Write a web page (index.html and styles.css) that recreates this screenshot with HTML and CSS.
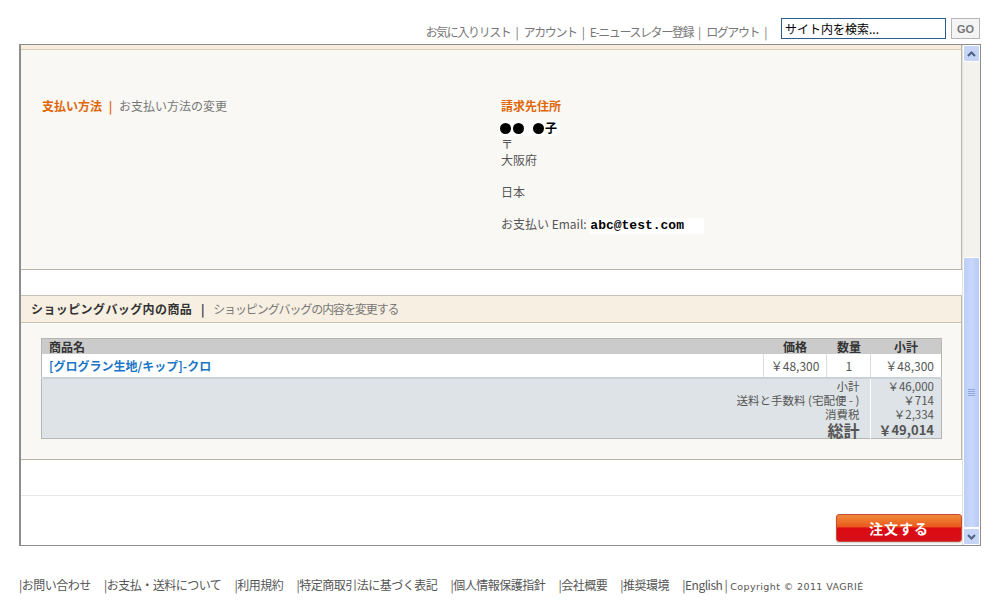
FILE: index.html
```html
<!DOCTYPE html>
<html lang="ja">
<head>
    <meta charset="UTF-8">
    <title>ご注文内容の確認</title>
    <link rel="stylesheet" href="styles.css">
</head>
<body>
    <div class="topbar">
        <div class="toplinks">
            <a href="#">お気に入りリスト</a><span class="sep">|</span>
            <a href="#">アカウント</a><span class="sep">|</span>
            <a href="#">E-ニュースレター登録</a><span class="sep">|</span>
            <a href="#">ログアウト</a><span class="sep">|</span>
        </div>
        <input class="search" type="text" value="サイト内を検索...">
        <button class="go">GO</button>
    </div>

    <div class="frame">
        <div class="content">
            <div class="panel billing">
                <div class="panel-strip"></div>
                <div class="billing-body">
                    <div class="col">
                        <span class="orange-title">支払い方法</span>
                        <span class="bar">|</span>
                        <a class="gray-link" href="#">お支払い方法の変更</a>
                    </div>
                    <div class="col address">
                        <div class="orange-title">請求先住所</div>
                        <div class="name"><span class="dot"></span><span class="dot"></span><span class="gap"></span><span class="dot"></span>子</div>
                        <div>〒</div>
                        <div>大阪府</div>
                        <div>&nbsp;</div>
                        <div>日本</div>
                        <div>&nbsp;</div>
                        <div>お支払い Email: <span class="email">abc@test.com</span></div>
                    </div>
                </div>
            </div>

            <div class="panel bag">
                <div class="bag-head">
                    <span class="bag-title">ショッピングバッグ内の商品</span>
                    <span class="bar dark">|</span>
                    <a class="gray-link narrow" href="#">ショッピングバッグの内容を変更する</a>
                </div>
                <div class="bag-body">
                    <table class="items">
                        <thead>
                            <tr>
                                <th class="name-col">商品名</th>
                                <th class="price">価格</th>
                                <th class="qty">数量</th>
                                <th class="sub">小計</th>
                            </tr>
                        </thead>
                        <tbody>
                            <tr class="item">
                                <td class="name-col"><a href="#">[グログラン生地/キップ]-クロ</a></td>
                                <td class="price num">￥48,300</td>
                                <td class="qty">1</td>
                                <td class="sub num">￥48,300</td>
                            </tr>
                            <tr class="sum first">
                                <td colspan="3" class="label">小計</td>
                                <td class="num">￥46,000</td>
                            </tr>
                            <tr class="sum">
                                <td colspan="3" class="label">送料と手数料 (宅配便 - )</td>
                                <td class="num">￥714</td>
                            </tr>
                            <tr class="sum">
                                <td colspan="3" class="label">消費税</td>
                                <td class="num">￥2,334</td>
                            </tr>
                            <tr class="sum total">
                                <td colspan="3" class="label">総計</td>
                                <td class="num">￥49,014</td>
                            </tr>
                        </tbody>
                    </table>
                </div>
            </div>

            <div class="order-area">
                <button class="order">注文する</button>
            </div>
        </div>

        <div class="scrollbar">
            <div class="sb-btn">
                <svg width="9" height="6" viewBox="0 0 9 6"><path d="M1 5 L4.5 1.5 L8 5" fill="none" stroke="#4d6185" stroke-width="2"/></svg>
            </div>
            <div class="sb-track">
                <div class="sb-thumb">
                    <div class="grip"></div>
                </div>
            </div>
            <div class="sb-btn">
                <svg width="9" height="6" viewBox="0 0 9 6"><path d="M1 1 L4.5 4.5 L8 1" fill="none" stroke="#4d6185" stroke-width="2"/></svg>
            </div>
        </div>
    </div>

    <div class="footer">
        <a href="#">|お問い合わせ</a>
        <a href="#">|お支払・送料について</a>
        <a href="#">|利用規約</a>
        <a href="#">|特定商取引法に基づく表記</a>
        <a href="#">|個人情報保護指針</a>
        <a href="#">|会社概要</a>
        <a href="#">|推奨環境</a>
        <span class="tail">|English |<span class="copy">Copyright © 2011 VAGRIÉ</span></span>
    </div>
</body>
</html>
```

FILE: styles.css
```css
body {
    margin: 0;
    font-family: "Noto Sans CJK JP", "DejaVu Sans", sans-serif;
    font-size: 12px;
    color: #555;
    background: #fff;
}
a {
    text-decoration: none;
}
.topbar {
    height: 44px;
    box-sizing: border-box;
    padding: 17px 20px 0 0;
    display: flex;
    justify-content: flex-end;
    align-items: flex-start;
}
.toplinks {
    padding-top: 7px;
    line-height: 16px;
    margin-right: 10px;
    letter-spacing: -1.4px;
}
.toplinks a {
    color: #777;
}
.toplinks .sep {
    color: #777;
    margin: 0 5px;
}
.search {
    width: 165px;
    height: 21px;
    box-sizing: border-box;
    border: 1px solid #2d5c8a;
    padding: 0 3px;
    font-family: inherit;
    font-size: 12px;
    color: #000;
    margin-top: 1px;
}
.go {
    width: 29px;
    height: 21px;
    margin-left: 5px;
    margin-top: 1px;
    border: 1px solid #b5b5b5;
    background: #f4f4f4;
    color: #777;
    font-family: "Liberation Sans", sans-serif;
    font-weight: bold;
    font-size: 11px;
    padding: 0;
}
.frame {
    margin-left: 19px;
    width: 962px;
    height: 502px;
    box-sizing: border-box;
    border: 1px solid #8d8d8d;
    border-left-width: 2px;
    display: flex;
    overflow: hidden;
}
.content {
    flex: 1;
    overflow: hidden;
    background: #fff;
}
.panel {
    background: #f9f8f4;
    border-right: 1px solid #bdb8ad;
}
.billing {
    height: 224px;
    border-bottom: 1px solid #b9b4a8;
}
.panel-strip {
    height: 4px;
    background: #f6eddc;
    border-bottom: 1px solid #d8ccb6;
}
.billing-body {
    display: flex;
    padding: 48px 0 0 21px;
    line-height: 16px;
}
.billing-body .col {
    width: 463px;
}
.billing-body .col:first-child {
    width: 462px;
}
.orange-title {
    color: #e0660a;
    font-weight: bold;
}
.bar {
    color: #e0660a;
    font-weight: bold;
    margin: 0 4px;
}
.bar.dark {
    color: #333;
    margin: 0 6px;
}
.gray-link {
    color: #777;
}
.gray-link.narrow {
    letter-spacing: -1.1px;
}
.address {
    color: #555;
}
.address .name {
    display: inline-block;
    background: #fff;
    color: #000;
    font-weight: bold;
    padding: 0 3px 0 0;
    margin: 6px 0 0 -2px;
    height: 16px;
}
.dot {
    display: inline-block;
    width: 11px;
    height: 11px;
    border-radius: 50%;
    background: #000;
    margin: 0 1px;
    vertical-align: -1px;
}
.gap {
    display: inline-block;
    width: 7px;
}
.email {
    display: inline-block;
    background: #fff;
    color: #000;
    font-family: "Liberation Mono", monospace;
    font-weight: bold;
    font-size: 13px;
    width: 114px;
    padding-left: 1px;
}
.bag {
    margin-top: 25px;
    border-top: 1px solid #c8c2b5;
    border-bottom: 1px solid #b9b4a8;
}
.bag-head {
    height: 27px;
    box-sizing: border-box;
    background: #f7f0e2;
    border-bottom: 1px solid #c9c3b6;
    padding: 5px 0 0 10px;
    line-height: 16px;
}
.bag-title {
    color: #333;
    font-weight: bold;
    letter-spacing: 0.4px;
}
.bag-body {
    padding: 15px 21px 20px 20px;
}
.items {
    width: 901px;
    border-collapse: collapse;
    border: 1px solid #b5b5b5;
    line-height: 14px;
}
.items th {
    background: #cbcbcb;
    color: #333;
    font-weight: bold;
    height: 15px;
    padding: 0 7px;
    text-align: center;
}
.items th.name-col {
    text-align: left;
}
.items .price {
    width: 43px;
}
.items .qty {
    width: 29px;
    text-align: center;
}
.items .sub {
    width: 53px;
}
.items td {
    padding: 0 7px;
}
.item td {
    background: #fff;
    height: 23px;
    border-left: 1px solid #ddd;
    color: #555;
}
.item td.name-col {
    border-left: none;
    font-weight: bold;
}
.item a {
    color: #1b76c6;
}
.num {
    text-align: right;
}
.sum td {
    background: #dde3e7;
    color: #555;
    height: 14px;
    font-size: 11.5px;
    line-height: 13px;
}
.sum td.label {
    text-align: right;
    border-right: 1px solid #fff;
    padding-right: 11px;
}
.sum.first td {
    border-top: 2px solid #c9d2d8;
}
.total td {
    height: 16px;
    vertical-align: bottom;
}
.total td.label {
    font-size: 16px;
    line-height: 16px;
    font-weight: bold;
}
.total td.num {
    font-weight: bold;
    font-size: 13px;
    line-height: 14px;
    padding-bottom: 1px;
}
.order-area {
    margin-top: 35px;
    border-top: 1px solid #e6e6e6;
    padding: 18px 0 0 0;
    display: flex;
    justify-content: flex-end;
}
.order {
    width: 126px;
    height: 28px;
    border: 1px solid #c64a3a;
    border-radius: 3px;
    background: linear-gradient(#f08a3c 0%, #e95a1c 45%, #dc0a12 50%, #d7101a 100%);
    color: #fff;
    font-family: inherit;
    font-size: 14px;
    font-weight: bold;
    letter-spacing: 1px;
    box-shadow: 0 1px 2px #ccc;
}
.scrollbar {
    width: 17px;
    display: flex;
    flex-direction: column;
    background: #f3f2ec;
    border-left: 1px solid #e3e2da;
}
.sb-btn {
    height: 17px;
    box-sizing: border-box;
    border: 1px solid #fff;
    border-radius: 2px;
    background: #c5d4f7;
    display: flex;
    align-items: center;
    justify-content: center;
}
.sb-track {
    flex: 1;
    display: flex;
    flex-direction: column;
    justify-content: flex-end;
}
.sb-thumb {
    height: 271px;
    box-sizing: border-box;
    border: 1px solid #fff;
    border-radius: 2px;
    background: linear-gradient(90deg, #bccff8, #c8d7fb 50%, #b8cbf6);
    display: flex;
    align-items: center;
    justify-content: center;
}
.grip {
    width: 7px;
    height: 7px;
    background: repeating-linear-gradient(#8ea6e0 0 1px, transparent 1px 2px);
}
.footer {
    padding: 31px 0 0 19px;
    line-height: 16px;
    white-space: nowrap;
    letter-spacing: -0.5px;
}
.footer a {
    color: #555;
    margin-right: 11px;
}
.footer .tail {
    color: #555;
}
.footer .copy {
    font-family: "DejaVu Sans", sans-serif;
    font-size: 9.5px;
    margin-left: 3px;
    letter-spacing: 0.4px;
}
```
